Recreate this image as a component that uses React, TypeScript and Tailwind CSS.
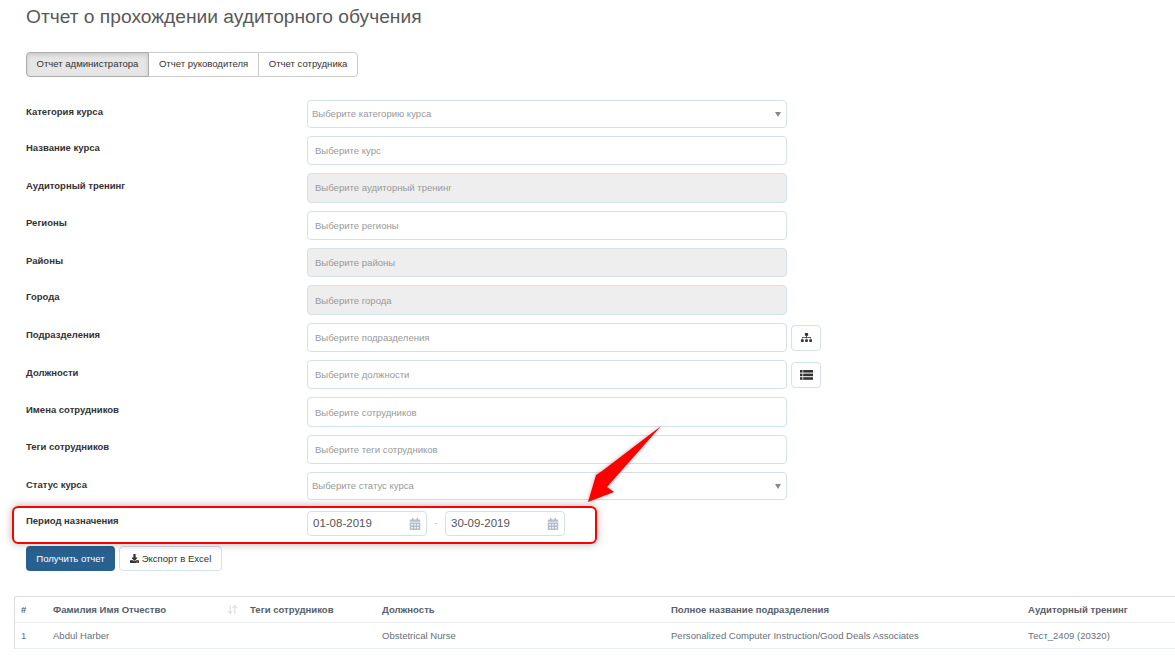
import React from 'react';
import { FaSitemap, FaCalendarAlt, FaDownload } from 'react-icons/fa';
import { ArrowDownUp } from 'lucide-react';

type Row = {
  label: string;
  placeholder: string;
  h: string;
  labelPt: string;
  textPt?: string;
  kind?: 'select' | 'disabled';
  icon?: React.ReactNode;
};

const ListIcon = () => (
  <svg width="13" height="10" viewBox="0 0 13 10" fill="currentColor">
    <rect x="0" y="0" width="2.5" height="2.6" />
    <rect x="3.2" y="0" width="9.8" height="2.6" />
    <rect x="0" y="3.6" width="2.5" height="2.6" />
    <rect x="3.2" y="3.6" width="9.8" height="2.6" />
    <rect x="0" y="7.2" width="2.5" height="2.6" />
    <rect x="3.2" y="7.2" width="9.8" height="2.6" />
  </svg>
);

const ROWS: Row[] = [
  { label: 'Категория курса', placeholder: 'Выберите категорию курса', h: 'h-[28px]', labelPt: 'pt-[6px]', kind: 'select' },
  { label: 'Название курса', placeholder: 'Выберите курс', h: 'h-[29px]', labelPt: 'pt-[6px]', textPt: 'pt-[2px]' },
  { label: 'Аудиторный тренинг', placeholder: 'Выберите аудиторный тренинг', h: 'h-[30px]', labelPt: 'pt-[7px]', kind: 'disabled' },
  { label: 'Регионы', placeholder: 'Выберите регионы', h: 'h-[29px]', labelPt: 'pt-[6px]', textPt: 'pt-[2px]' },
  { label: 'Районы', placeholder: 'Выберите районы', h: 'h-[29px]', labelPt: 'pt-[7px]', textPt: 'pt-[2px]', kind: 'disabled' },
  { label: 'Города', placeholder: 'Выберите города', h: 'h-[30px]', labelPt: 'pt-[6px]', textPt: 'pt-[2px]', kind: 'disabled' },
  { label: 'Подразделения', placeholder: 'Выберите подразделения', h: 'h-[29px]', labelPt: 'pt-[6px]', textPt: 'pt-[2px]', icon: <FaSitemap size={11} /> },
  { label: 'Должности', placeholder: 'Выберите должности', h: 'h-[29px]', labelPt: 'pt-[7px]', textPt: 'pt-[2px]', icon: <ListIcon /> },
  { label: 'Имена сотрудников', placeholder: 'Выберите сотрудников', h: 'h-[30px]', labelPt: 'pt-[7px]', textPt: 'pt-[2px]' },
  { label: 'Теги сотрудников', placeholder: 'Выберите теги сотрудников', h: 'h-[29px]', labelPt: 'pt-[6px]', textPt: 'pt-[2px]' },
  { label: 'Статус курса', placeholder: 'Выберите статус курса', h: 'h-[28px]', labelPt: 'pt-[7px]', kind: 'select' },
];

const COLS = ['w-[32px]', 'w-[197px]', 'w-[132px]', 'w-[289px]', 'w-[357px]', 'w-[147px]'];

const DateInput = ({ value }: { value: string }) => (
  <div className="flex h-[25px] w-[120px] items-center justify-between rounded-[4px] border border-[#d5e0ea] pl-[5px] pr-[5px] text-[11.5px] text-[#555555]">
    <span>{value}</span>
    <FaCalendarAlt size={12} className="text-[#b4bec8]" />
  </div>
);

export default function App() {
  return (
    <div className="relative h-[656px] w-[1175px] overflow-hidden bg-white font-['Liberation_Sans',Arial,sans-serif]">
      <div className="pl-[26px] pt-[7px]">
        <h1 className="text-[19.2px] leading-[20px] text-[#595959]">Отчет о прохождении аудиторного обучения</h1>

        <div className="mt-[25px] flex h-[25px] w-fit text-[9.55px] text-[#333333]">
          <div className="flex items-center rounded-l-[4px] border border-[#adadad] bg-[#e6e6e6] px-[9.5px] shadow-[inset_0_2px_4px_rgba(0,0,0,0.13)]">Отчет администратора</div>
          <div className="flex items-center border-y border-[#cccccc] px-[10px]">Отчет руководителя</div>
          <div className="flex items-center rounded-r-[4px] border border-[#cccccc] px-[9.5px]">Отчет сотрудника</div>
        </div>

        <div className="mt-[23px] flex flex-col gap-[8px]">
          {ROWS.map((row) => (
            <div key={row.label} className={`flex ${row.h}`}>
              <div className={`w-[281px] ${row.labelPt} text-[9.5px] font-bold leading-[12px] text-[#333333]`}>{row.label}</div>
              <div
                className={`flex w-[480px] items-center justify-between rounded-[4px] border border-[#d5e0ea] text-[9.55px] text-[#999999] ${
                  row.kind === 'disabled' ? 'bg-[#eeeeee]' : 'bg-white'
                } ${row.kind === 'select' ? 'pl-[4px] pr-[5px]' : 'pl-[7px]'} ${row.textPt ?? ''}`}
              >
                <span>{row.placeholder}</span>
                {row.kind === 'select' && <span className="border-x-[3.5px] border-t-[5px] border-x-transparent border-t-[#888888]" />}
              </div>
              {row.icon && (
                <div className="ml-[4px] flex h-[26px] w-[30px] items-center justify-center self-center rounded-[4px] border border-[#d5e0ea] text-[#333333]">
                  {row.icon}
                </div>
              )}
            </div>
          ))}
        </div>

        <div className="mt-[11px] flex h-[25px]">
          <div className="w-[281px] pt-[4px] text-[9.5px] font-bold leading-[12px] text-[#333333]">Период назначения</div>
          <DateInput value="01-08-2019" />
          <span className="mx-[7px] w-[4px] self-center text-[9px] text-[#b0bcc6]">-</span>
          <DateInput value="30-09-2019" />
        </div>

        <div className="mt-[10px] flex h-[25px] gap-[4px] text-[9.55px]">
          <div className="flex w-[89px] items-center justify-center rounded-[4px] bg-[#286090] pt-[2px] text-white">Получить отчет</div>
          <div className="flex w-[103px] items-center justify-center gap-[3px] rounded-[4px] border border-[#d5e0ea] pt-[2px] text-[#333333]">
            <FaDownload size={9} className="-mt-[2px]" />
            <span>Экспорт в Excel</span>
          </div>
        </div>
      </div>

      <div className="ml-[14px] mt-[25px] w-[1161px] rounded-tl-[3px] border-l border-t border-[#dddddd] text-[9.55px]">
        <div className="flex h-[26px] items-center border-b border-[#e8edf1] pt-[1px] font-bold text-[#55606a]">
          {['#', 'Фамилия Имя Отчество', 'Теги сотрудников', 'Должность', 'Полное название подразделения', 'Аудиторный тренинг'].map((title, i) => (
            <div key={title} className={`${COLS[i]} relative pl-[6px]`}>
              {title}
              {i === 1 && <ArrowDownUp size={11} strokeWidth={2.5} className="absolute right-[6px] top-[1px] text-[#dddddd]" />}
            </div>
          ))}
        </div>
        <div className="flex h-[26px] items-center border-b border-[#e8edf1] pt-[2px] text-[#66707a]">
          {['1', 'Abdul Harber', '', 'Obstetrical Nurse', 'Personalized Computer Instruction/Good Deals Associates', 'Тест_2409 (20320)'].map((cell, i) => (
            <div key={i} className={`${COLS[i]} pl-[6px]`}>{cell}</div>
          ))}
        </div>
      </div>

      {/* красная рамка и стрелка поверх страницы */}
      <div className="absolute left-[12px] top-[506px] h-[38px] w-[585px] rounded-[6px] border-2 border-[#ff0000] shadow-[0_0_8px_rgba(0,0,0,0.3)]" />
      <svg className="absolute left-0 top-0" width="1175" height="656">
        <polygon
          points="588,502 614,492 607,487 661,426 602,471 596,475"
          fill="#ff0000"
          style={{ filter: 'drop-shadow(0 0 2px rgba(0,0,0,0.3))' }}
        />
      </svg>
    </div>
  );
}
